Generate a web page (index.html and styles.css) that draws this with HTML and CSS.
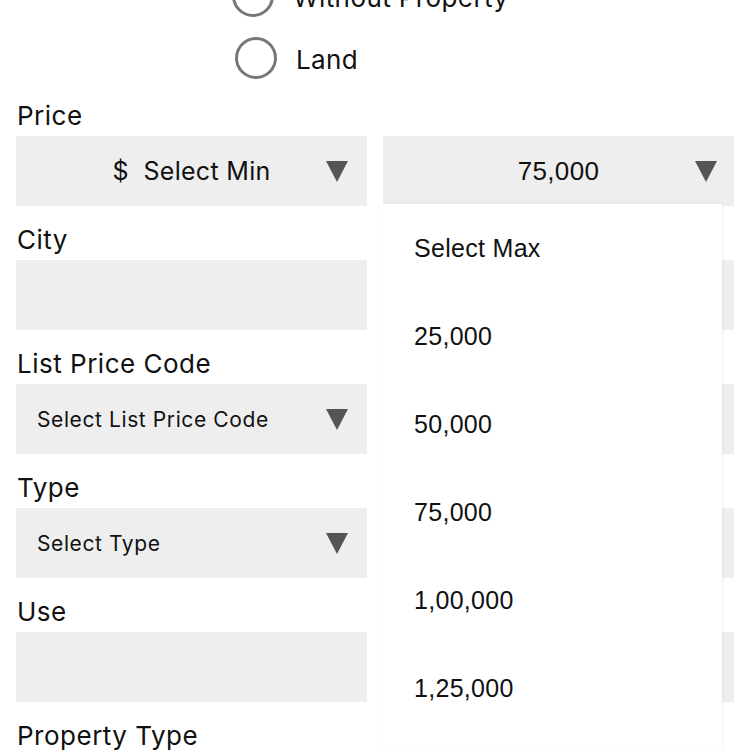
FILE: index.html
```html
<!DOCTYPE html>
<html>
<head>
<meta charset="utf-8">
<link rel="stylesheet" href="styles.css">
</head>
<body>
<div class="page">
  <div class="radios">
    <div class="radio-row shifted"><span class="radio"></span><span class="radio-text">Without Property</span></div>
    <div class="radio-row"><span class="radio"></span><span class="radio-text">Land</span></div>
  </div>

  <div class="section">
    <div class="label">Price</div>
    <div class="row">
      <div class="box select centered">
        <span class="value">$&nbsp; Select Min</span>
        <span class="arrow"></span>
      </div>
      <div class="box select centered open">
        <span class="value arial">75,000</span>
        <span class="arrow"></span>
        <ul class="menu">
          <li>Select Max</li>
          <li>25,000</li>
          <li>50,000</li>
          <li>75,000</li>
          <li>1,00,000</li>
          <li>1,25,000</li>
        </ul>
      </div>
    </div>
  </div>

  <div class="section">
    <div class="label">City</div>
    <div class="row">
      <div class="box"></div>
      <div class="box"></div>
    </div>
  </div>

  <div class="section">
    <div class="label">List Price Code</div>
    <div class="row">
      <div class="box select">
        <span class="value small">Select List Price Code</span>
        <span class="arrow"></span>
      </div>
      <div class="box"></div>
    </div>
  </div>

  <div class="section">
    <div class="label">Type</div>
    <div class="row">
      <div class="box select">
        <span class="value small">Select Type</span>
        <span class="arrow"></span>
      </div>
      <div class="box"></div>
    </div>
  </div>

  <div class="section">
    <div class="label">Use</div>
    <div class="row">
      <div class="box"></div>
      <div class="box"></div>
    </div>
  </div>

  <div class="section">
    <div class="label">Property Type</div>
  </div>
</div>
</body>
</html>
```

FILE: styles.css
```css
html, body {
  margin: 0;
  padding: 0;
  background: #ffffff;
}

body {
  width: 750px;
  height: 750px;
  overflow: hidden;
  font-family: Inter, "Noto Sans", sans-serif;
  color: #111111;
}

.page {
  padding: 0 16px;
}

.radios {
  margin-top: -35px;
  padding-left: 219px;
}

.radio-row {
  height: 62px;
  display: flex;
  align-items: center;
  gap: 19px;
}

.radio-row.shifted {
  margin-left: -3px;
}

.radio {
  width: 36px;
  height: 36px;
  border: 3px solid #777777;
  border-radius: 50%;
  flex: none;
}

.radio-text {
  font-size: 26px;
  letter-spacing: 0.4px;
  position: relative;
  top: 1px;
}

.section {
  margin-top: 19px;
}

.radios + .section {
  margin-top: 12px;
}

.label {
  height: 30px;
  line-height: 30px;
  font-size: 26px;
  letter-spacing: 0.5px;
  margin-bottom: 5px;
  padding-left: 1px;
}

.row {
  display: grid;
  grid-template-columns: 1fr 1fr;
  gap: 16px;
}

.box {
  height: 70px;
  background: #eeeeee;
  position: relative;
}

.select {
  display: flex;
  align-items: center;
  padding-left: 21px;
}

.select.centered {
  justify-content: center;
  padding-left: 0;
}

.value {
  font-size: 25px;
  letter-spacing: 0.3px;
  white-space: nowrap;
}

.value.small {
  font-size: 21px;
  letter-spacing: 0.6px;
}

.arial {
  font-family: "Liberation Sans", Arial, sans-serif;
  font-size: 26px;
  letter-spacing: 0.3px;
}

.arrow {
  position: absolute;
  right: 19px;
  top: 25px;
  width: 0;
  height: 0;
  border-left: 11.5px solid transparent;
  border-right: 11.5px solid transparent;
  border-top: 21px solid #555555;
}

.open .arrow {
  right: 17px;
}

.menu {
  position: absolute;
  top: 68px;
  left: 0;
  width: 339px;
  margin: 0;
  padding: 0 0 17px;
  list-style: none;
  background: #ffffff;
  box-shadow: 1px 0 3px rgba(0, 0, 0, 0.06);
  z-index: 2;
}

.menu li {
  height: 88px;
  line-height: 88px;
  padding-left: 31px;
  font-family: "Liberation Sans", Arial, sans-serif;
  font-size: 25px;
  letter-spacing: 0.3px;
  color: #111111;
}
```
